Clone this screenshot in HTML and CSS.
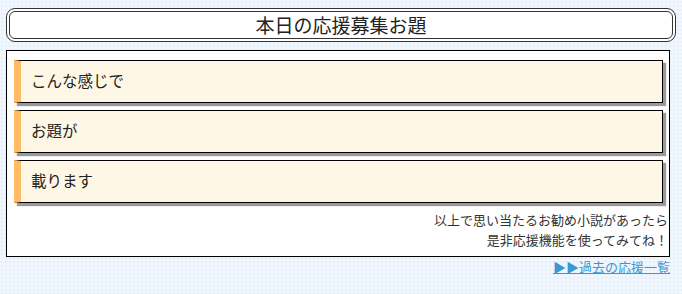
FILE: index.html
```html
<!DOCTYPE html>
<html lang="ja">
  <head>
    <meta charset="UTF-8" />
    <meta name="viewport" content="width=device-width, initial-scale=1.0" />
    <title>本日の応援募集お題</title>
    <link rel="stylesheet" href="styles.css">
  </head>

  <body>
    <h1 class="title-box">本日の応援募集お題</h1>

    <!-- Topic list -->
    <div class="topic-box">
      <ul class="topic-list">
        <li class="topic-item">こんな感じで</li>
        <li class="topic-item">お題が</li>
        <li class="topic-item">載ります</li>
      </ul>
      <p class="topic-note">
        以上で思い当たるお勧め小説があったら<br />是非応援機能を使ってみてね！
      </p>
    </div>

    <div class="history-link">
      <a href="#">▶▶過去の応援一覧</a>
    </div>
  </body>
</html>
```

FILE: styles.css
```css
:root {
  --text-color: #222;
  --bg-color: #eff6fd;
  --dot-color: #e6eef8;
  --item-bg: #fff7e6;
  --item-accent: #ffbb66;
  --link-color: #3a98d6;
}

* {
  box-sizing: border-box;
  margin: 0;
  padding: 0;
}

body {
  font-family: "Noto Sans CJK JP", "Noto Sans", sans-serif;
  color: var(--text-color);
  background-color: var(--bg-color);
  background-image: radial-gradient(var(--dot-color) 0.8px, transparent 0.9px);
  background-size: 4px 4px;
  padding: 8px 6px 0 6px;
}

.title-box {
  background-color: #fff;
  border: 4px double #333;
  border-radius: 9px;
  text-align: center;
  font-size: 19px;
  font-weight: 400;
  line-height: 26px;
  height: 34px;
}

.topic-box {
  margin-top: 8px;
  margin-right: 6px;
  background-color: #fff;
  border: 1px solid #000;
  padding: 9px 1px 6px 7px;
}

.topic-list {
  list-style-type: none;
}

.topic-item {
  background-color: var(--item-bg);
  border: 1px solid #000;
  border-left: 7px solid var(--item-accent);
  box-shadow: 3px 3px 1px #9a9a9a;
  margin-right: 5px;
  margin-bottom: 7px;
  padding: 9px 10px 11px 10px;
  font-size: 15.5px;
  line-height: 21px;
}

.topic-note {
  margin-top: 3px;
  text-align: right;
  font-size: 13px;
  line-height: 20px;
  color: #333;
}

.history-link {
  text-align: right;
  margin-right: 6px;
  font-size: 13px;
  line-height: 20px;
}

.history-link a {
  color: var(--link-color);
}
```
